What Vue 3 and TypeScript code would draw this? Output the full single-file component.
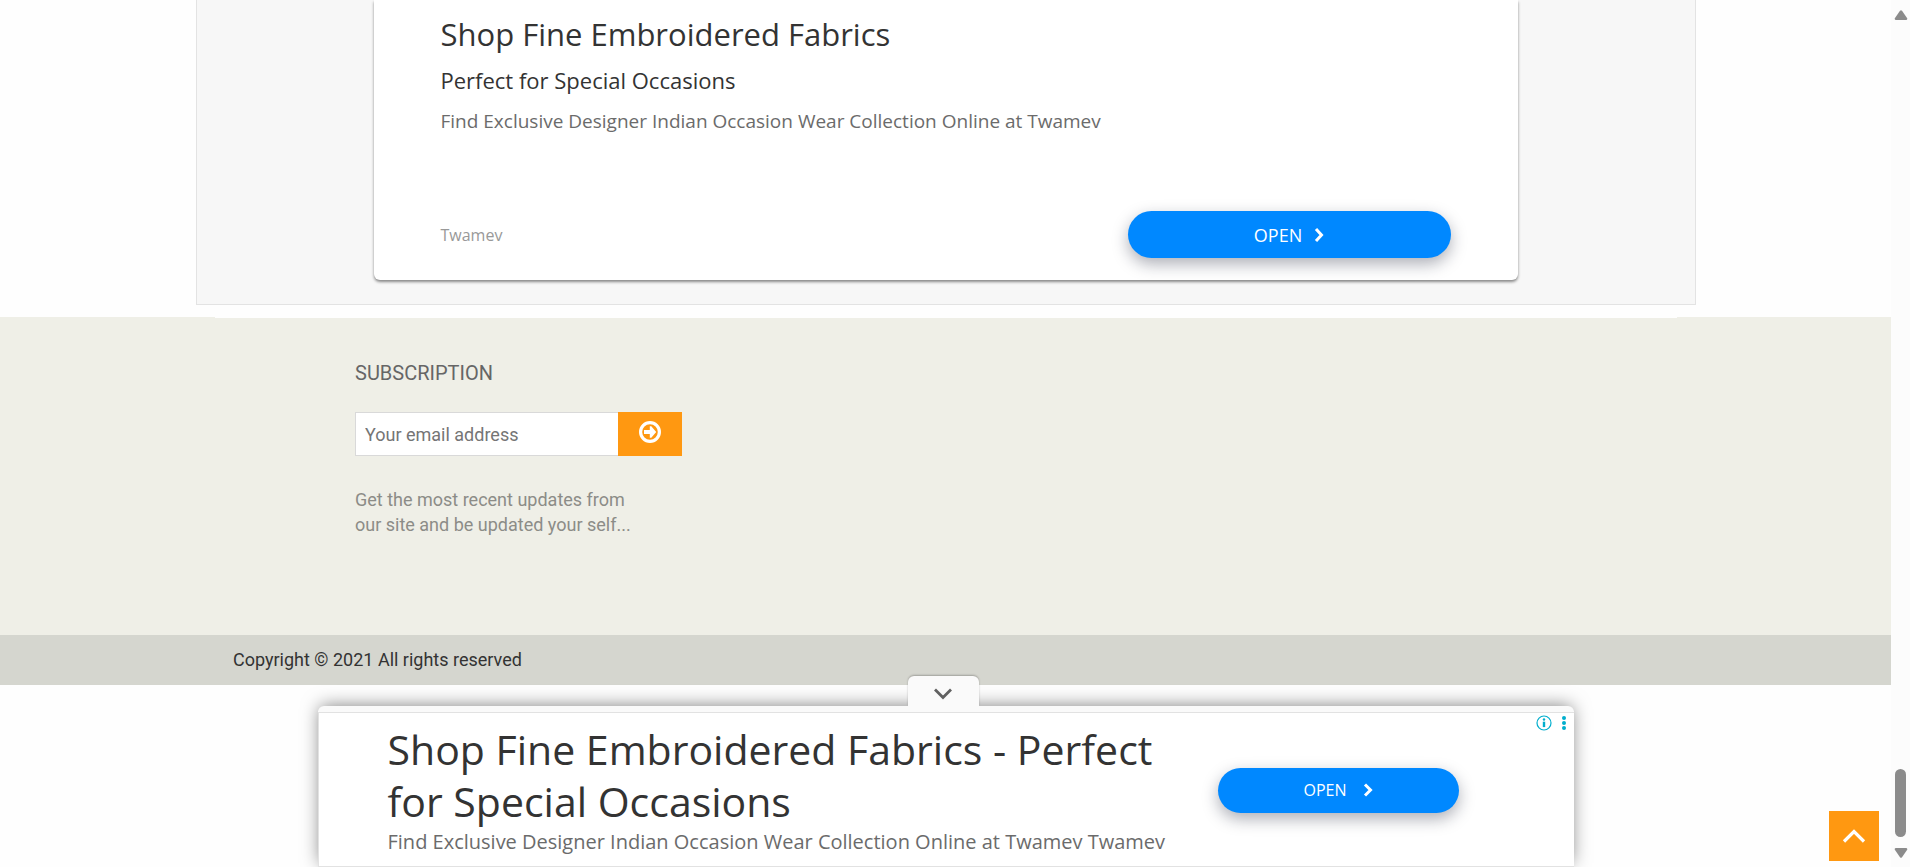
<script setup lang="ts">
import { ref } from 'vue'

const email = ref('')
const adOpen = ref(true)

function toTop(): void {
  window.scrollTo({ top: 0, behavior: 'smooth' })
}
</script>

<template>
  <div class="shell">
    <div class="page">
      <main class="content">
        <section class="panel">
          <article class="card">
            <h2 class="card-title">Shop Fine Embroidered Fabrics</h2>
            <h3 class="card-subtitle">Perfect for Special Occasions</h3>
            <p class="ad-text">Find Exclusive Designer Indian Occasion Wear Collection Online at Twamev</p>
            <div class="card-foot">
              <span class="brand">Twamev</span>
              <a class="open open-large" href="#">
                <span>OPEN</span>
                <svg width="10" height="16" viewBox="0 0 10 16" aria-hidden="true">
                  <path d="M2 2l5.500 6L2 14" />
                </svg>
              </a>
            </div>
          </article>
        </section>
      </main>

      <footer class="footer">
        <div class="footer-edge"></div>
        <form class="subscribe" @submit.prevent>
          <label class="subscribe-title" for="email">SUBSCRIPTION</label>
          <div class="field">
            <input id="email" v-model="email" type="email" placeholder="Your email address" />
            <button type="submit" aria-label="Subscribe">
              <svg width="22" height="22" viewBox="0 0 22 22" aria-hidden="true">
                <circle cx="11" cy="11" r="9.400" fill="none" stroke="#fff" stroke-width="3.200" />
                <path d="M5 9h5.800V5.300h1.500L17.200 11l-4.900 5.700h-1.500V13H5z" fill="#fff" />
              </svg>
            </button>
          </div>
          <p class="note">Get the most recent updates from our site and be updated your self...</p>
        </form>
        <div class="copyright">Copyright © 2021 All rights reserved</div>
      </footer>

      <aside class="anchor">
        <button class="tab" type="button" aria-label="Toggle advertisement" @click="adOpen = !adOpen">
          <svg width="20" height="12" viewBox="0 0 20 12" aria-hidden="true">
            <path d="M2 1.500l8 8 8-8" fill="none" stroke="#616161" stroke-width="2.800" />
          </svg>
        </button>
        <div v-show="adOpen" class="banner">
          <div class="banner-copy">
            <h2 class="banner-title">Shop Fine Embroidered Fabrics - Perfect for Special Occasions</h2>
            <p class="ad-text">Find Exclusive Designer Indian Occasion Wear Collection Online at Twamev Twamev</p>
          </div>
          <a class="open open-small" href="#">
            <span>OPEN</span>
            <svg width="10" height="16" viewBox="0 0 10 16" aria-hidden="true">
              <path d="M2 2.500l5.500 5.500L2 13.500" />
            </svg>
          </a>
          <div class="choices">
            <svg width="16" height="16" viewBox="0 0 16 16" aria-hidden="true">
              <circle cx="8" cy="8" r="7" fill="none" stroke="#00aecd" stroke-width="1.200" />
              <circle cx="8" cy="4.500" r="1.200" fill="#00aecd" />
              <path d="M6.800 6.700h2.400v5.400H6.800z" fill="#00aecd" />
            </svg>
            <svg width="6" height="16" viewBox="0 0 6 16" aria-hidden="true">
              <g fill="#00aecd">
                <circle cx="3" cy="3" r="2" />
                <circle cx="3" cy="8" r="2" />
                <circle cx="3" cy="13" r="2" />
              </g>
            </svg>
          </div>
        </div>
      </aside>

      <button class="to-top" type="button" aria-label="Back to top" @click="toTop">
        <svg width="24" height="16" viewBox="0 0 24 16" aria-hidden="true">
          <path d="M2 13.500L12 3.500l10 10" fill="none" stroke="#fff" stroke-width="3.200" />
        </svg>
      </button>
    </div>

    <div class="scrollbar" aria-hidden="true">
      <svg width="14" height="10" viewBox="0 0 14 10">
        <path d="M6 .8Q7 -.4 8 .8L13.200 8.300Q13.600 10 12 10H2Q.4 10 .8 8.300z" fill="#8b8b8b" />
      </svg>
      <div class="thumb"></div>
      <svg width="14" height="10" viewBox="0 0 14 10">
        <path d="M6 9.200Q7 10.400 8 9.200L13.200 1.700Q13.600 0 12 0H2Q.4 0 .8 1.700z" fill="#8b8b8b" />
      </svg>
    </div>
  </div>
</template>

<style>
html,
body {
  margin: 0;
  background: #fefefe;
}
</style>

<style scoped>
* {
  box-sizing: border-box;
}

.shell {
  display: flex;
  height: 100vh;
  overflow: hidden;
  font-family: Roboto, "Liberation Sans", sans-serif;
  font-size: 18px;
}

.page {
  position: relative;
  flex: 1;
  min-width: 0;
}

.panel {
  max-width: 1500px;
  margin: 0 auto;
  padding: 0 24px 24px;
  border: 1px solid #e3e3e3;
  border-top: 0;
  background: #f7f7f7;
}

.card {
  max-width: 1144px;
  margin: 0 auto;
  padding: 12px 67px 22px;
  border-radius: 0 0 6px 6px;
  background: #fff;
  box-shadow: 0 2px 3px rgba(0, 0, 0, 0.45);
  font-family: "Open Sans", "Noto Sans", sans-serif;
}

h2,
h3,
p {
  margin: 0;
  font-weight: 400;
}

.card-title {
  font-size: 31px;
  line-height: 44px;
  color: #333;
}

.card-subtitle {
  margin-top: 8px;
  font-size: 22px;
  line-height: 32px;
  color: #333;
}

.ad-text {
  font-family: "Open Sans", "Noto Sans", sans-serif;
  font-size: 19px;
  line-height: 26px;
  color: #6b6b6b;
}

.card .ad-text {
  margin-top: 12px;
}

.card-foot {
  display: flex;
  align-items: center;
  justify-content: space-between;
  margin-top: 77px;
}

.brand {
  font-size: 16px;
  color: #999;
}

.open {
  display: flex;
  align-items: center;
  justify-content: center;
  gap: 12px;
  border-radius: 24px;
  background: #08f;
  box-shadow: 0 6px 16px rgba(20, 25, 50, 0.35);
  color: #fff;
  font-family: "Open Sans", "Noto Sans", sans-serif;
  text-decoration: none;
}

.open path {
  fill: none;
  stroke: #fff;
  stroke-width: 3;
}

.open-large {
  width: 323px;
  height: 47px;
  font-size: 18px;
}

.open-small {
  flex: none;
  width: 241px;
  height: 45px;
  gap: 16px;
  font-size: 16px;
}

.footer {
  margin-top: 12px;
  background: #efefe7;
}

.footer-edge {
  max-width: 1462px;
  height: 1px;
  margin: 0 auto;
  background: #fefefe;
}

.subscribe {
  max-width: 1181px;
  min-height: 317px;
  margin: 0 auto;
  padding-top: 42px;
}

.subscribe-title {
  display: block;
  line-height: 26px;
  font-size: 20px;
  color: #666;
}

.field {
  display: flex;
  width: 327px;
  height: 44px;
  margin-top: 26px;
}

.field input {
  flex: 1;
  min-width: 0;
  padding: 0 9px;
  border: 1px solid #d9d9d9;
  border-right: 0;
  border-radius: 0;
  background: #fff;
  font: inherit;
  color: #555;
}

.field input::placeholder {
  color: #757575;
  opacity: 1;
}

.field button {
  display: flex;
  justify-content: center;
  width: 64px;
  padding: 9px 0 0;
  border: 0;
  background: #ff9811;
}

.note {
  width: 280px;
  margin-top: 31px;
  line-height: 25px;
  color: #8c8c87;
}

.copyright {
  padding: 0 233px;
  background: #d5d6cf;
  line-height: 50px;
  color: #333;
}

.anchor {
  position: absolute;
  right: 0;
  bottom: 0;
  left: 0;
  width: 1256px;
  max-width: 100%;
  margin: 0 auto;
  border-top: 6px solid #fafafa;
  border-radius: 6px 6px 0 0;
  background: #fff;
  box-shadow: 0 -2px 18px -2px rgba(0, 0, 0, 0.5);
}

.tab {
  position: absolute;
  bottom: 100%;
  left: 590px;
  display: flex;
  align-items: center;
  justify-content: center;
  width: 71px;
  height: 30px;
  margin-bottom: 6px;
  padding: 6px 0 0;
  border: 0;
  border-radius: 6px 6px 0 0;
  background: #fafafa;
  box-shadow: 0 -1px 2px rgba(0, 0, 0, 0.25);
  clip-path: inset(-4px -4px 0 -4px);
}

.banner {
  position: relative;
  display: flex;
  align-items: center;
  justify-content: space-between;
  padding: 10px 115px 9px 69px;
  border: 1px solid #e2e2e2;
  border-right: 0;
}

.banner-copy {
  width: 800px;
}

.banner-title {
  font-family: "Open Sans", "Noto Sans", sans-serif;
  font-size: 41px;
  line-height: 52px;
  color: #333;
}

.banner .ad-text {
  font-size: 20px;
  line-height: 30px;
}

.choices {
  position: absolute;
  top: 2px;
  right: 7px;
  display: flex;
  gap: 9px;
}

.to-top {
  position: absolute;
  right: 12px;
  bottom: 6px;
  display: flex;
  align-items: center;
  justify-content: center;
  width: 50px;
  height: 50px;
  padding: 0;
  border: 0;
  background: #ff9811;
}

.scrollbar {
  display: flex;
  flex: none;
  flex-direction: column;
  align-items: center;
  width: 19px;
  padding: 10px 0 9px;
  background: #fcfcfc;
}

.thumb {
  width: 11px;
  height: 68px;
  margin: auto 0 11px;
  border-radius: 6px;
  background: #8b8b8b;
}
</style>
